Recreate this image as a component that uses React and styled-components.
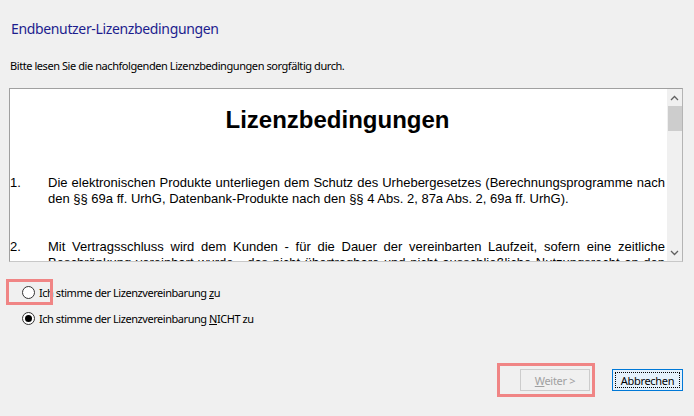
import React from 'react';
import styled, { createGlobalStyle } from 'styled-components';

const GlobalStyle = createGlobalStyle`
  html, body {
    margin: 0;
    padding: 0;
    background: #f0f0f0;
  }
  body {
    font-family: "Noto Sans", "Open Sans", sans-serif;
    color: #000;
  }
`;

const Dialog = styled.div`
  width: 694px;
  height: 416px;
  box-sizing: border-box;
  background: #f0f0f0;
  display: flex;
  flex-direction: column;
  padding: 0 11px 0 9px;
`;

const Title = styled.h1`
  margin: 19px 0 0 2px;
  font-size: 14px;
  line-height: 20px;
  font-weight: 400;
  letter-spacing: -0.35px;
  color: #1d1d8e;
`;

const Subtitle = styled.p`
  margin: 19px 0 0 1px;
  font-size: 11px;
  line-height: 16px;
  letter-spacing: -0.43px;
`;

const Panel = styled.div`
  margin-top: 14px;
  height: 174px;
  box-sizing: border-box;
  border: 1px solid #a0a0a0;
  border-right-color: #b4b4b4;
  border-bottom-color: #c8c8c8;
  background: #fff;
  display: flex;
  overflow: hidden;
`;

const Document = styled.div`
  flex: 1;
  overflow: hidden;
  padding: 0 2px 0 0;
  font-family: "Liberation Sans", Arial, sans-serif;
`;

const DocHeading = styled.h2`
  margin: 17px 0 0;
  text-align: center;
  font-size: 24px;
  line-height: 28px;
  font-weight: 700;
`;

const List = styled.ol`
  list-style: none;
  margin: 41px 0 0;
  padding: 0;
  display: flex;
  flex-direction: column;
  gap: 32px;
`;

const Item = styled.li`
  display: grid;
  grid-template-columns: 38px 1fr;
  font-size: 13px;
  line-height: 16px;
`;

const ItemText = styled.span`
  text-align: justify;
`;

const Scrollbar = styled.div`
  width: 15px;
  background: #f0f0f0;
  display: flex;
  flex-direction: column;
`;

const Arrow = styled.div`
  height: 17px;
  display: flex;
  align-items: center;
  justify-content: center;
`;

const Track = styled.div`
  flex: 1;
`;

const Thumb = styled.div`
  height: 25px;
  margin: 0 0 0 1px;
  background: #cdcdcd;
`;

const Choices = styled.div`
  margin-top: 22px;
  display: flex;
  flex-direction: column;
  gap: 9px;
  padding-left: 13px;
`;

const Choice = styled.label`
  display: flex;
  align-items: center;
  gap: 4px;
  font-size: 11px;
  line-height: 17px;
  letter-spacing: -0.45px;
`;

const RadioWrap = styled.span`
  position: relative;
  display: inline-flex;
`;

const Radio = styled.span`
  width: 13px;
  height: 13px;
  box-sizing: border-box;
  border-radius: 50%;
  border: 1px solid #333;
  background: #fff;
  display: inline-flex;
  align-items: center;
  justify-content: center;

  &::after {
    content: '';
    width: 7px;
    height: 7px;
    border-radius: 50%;
    background: ${p => (p.$checked ? '#000' : 'transparent')};
  }
`;

const Highlight = styled.span`
  position: absolute;
  box-sizing: border-box;
  border: 3px solid #f08585;
  pointer-events: none;
  top: ${p => p.$top}px;
  left: ${p => p.$left}px;
  right: ${p => p.$right}px;
  bottom: ${p => p.$bottom}px;
`;

const Footer = styled.div`
  margin-top: auto;
  margin-bottom: 25px;
  display: flex;
  justify-content: flex-end;
  gap: 22px;
`;

const ButtonWrap = styled.span`
  position: relative;
  display: inline-flex;
`;

const Button = styled.button`
  width: ${p => p.$w}px;
  height: 22px;
  box-sizing: border-box;
  padding: 0;
  font-family: "Noto Sans", "Open Sans", sans-serif;
  font-size: 11px;
  letter-spacing: -0.3px;
  border: 1px solid ${p => (p.$focus ? '#0078d7' : '#cccccc')};
  background: ${p => (p.$focus ? '#e5f1fb' : '#f0f0f0')};
  color: ${p => (p.disabled ? '#a0a0a0' : '#000')};
  display: flex;
  align-items: center;
  justify-content: center;
  position: relative;

  ${p =>
    p.$focus &&
    `&::after {
      content: '';
      position: absolute;
      inset: 2px;
      border: 1px dotted #000;
    }`}
`;

const Chevron = ({ up }) => (
  <svg width="9" height="6" viewBox="0 0 9 6">
    <path
      d={up ? 'M1 5 L4.5 1.5 L8 5' : 'M1 1 L4.5 4.5 L8 1'}
      fill="none"
      stroke="#606060"
      strokeWidth="1.3"
    />
  </svg>
);

const App = () => {
  return (
    <>
      <GlobalStyle />
      <Dialog>
        <Title>Endbenutzer-Lizenzbedingungen</Title>
        <Subtitle>Bitte lesen Sie die nachfolgenden Lizenzbedingungen sorgfältig durch.</Subtitle>

        <Panel>
          <Document>
            <DocHeading>Lizenzbedingungen</DocHeading>
            <List>
              <Item>
                <span>1.</span>
                <ItemText>
                  Die elektronischen Produkte unterliegen dem Schutz des Urhebergesetzes (Berechnungsprogramme nach
                  den §§ 69a ff. UrhG, Datenbank-Produkte nach den §§ 4 Abs. 2, 87a Abs. 2, 69a ff. UrhG).
                </ItemText>
              </Item>
              <Item>
                <span>2.</span>
                <ItemText>
                  Mit Vertragsschluss wird dem Kunden - für die Dauer der vereinbarten Laufzeit, sofern eine zeitliche
                  Beschränkung vereinbart wurde - das nicht übertragbare und nicht ausschließliche Nutzungsrecht an den
                  elektronischen Produkten eingeräumt.
                </ItemText>
              </Item>
            </List>
          </Document>
          <Scrollbar>
            <Arrow><Chevron up /></Arrow>
            <Track>
              <Thumb />
            </Track>
            <Arrow><Chevron /></Arrow>
          </Scrollbar>
        </Panel>

        <Choices>
          <Choice>
            <RadioWrap>
              <Radio />
              <Highlight $top={-7} $left={-16} $right={-18} $bottom={-6} />
            </RadioWrap>
            <span>Ich stimme der Lizenzvereinbarung <u>z</u>u</span>
          </Choice>
          <Choice>
            <RadioWrap>
              <Radio $checked />
            </RadioWrap>
            <span>Ich stimme der Lizenzvereinbarung <u>N</u>ICHT zu</span>
          </Choice>
        </Choices>

        <Footer>
          <ButtonWrap>
            <Button $w={70} disabled>
              <span><u>W</u>eiter &gt;</span>
            </Button>
            <Highlight $top={-6} $left={-23} $right={-5} $bottom={-6} />
          </ButtonWrap>
          <Button $w={71} $focus>Abbrechen</Button>
        </Footer>
      </Dialog>
    </>
  );
};

export default App;
